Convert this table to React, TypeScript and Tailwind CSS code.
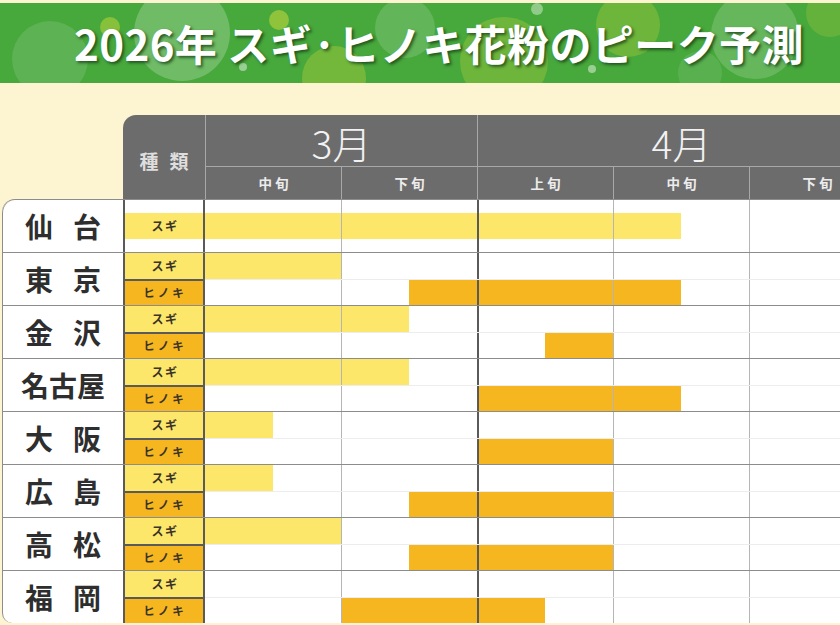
import React from "react";

type Sub = { sp: "スギ" | "ヒノキ"; s: number; e: number };
type City = { name: string[]; rows: Sub[]; single?: boolean };

const cities: City[] = [
  { name: ["仙", "台"], rows: [{ sp: "スギ", s: 0, e: 7 }], single: true },
  { name: ["東", "京"], rows: [{ sp: "スギ", s: 0, e: 2 }, { sp: "ヒノキ", s: 3, e: 7 }] },
  { name: ["金", "沢"], rows: [{ sp: "スギ", s: 0, e: 3 }, { sp: "ヒノキ", s: 5, e: 6 }] },
  { name: ["名", "古", "屋"], rows: [{ sp: "スギ", s: 0, e: 3 }, { sp: "ヒノキ", s: 4, e: 7 }] },
  { name: ["大", "阪"], rows: [{ sp: "スギ", s: 0, e: 1 }, { sp: "ヒノキ", s: 4, e: 6 }] },
  { name: ["広", "島"], rows: [{ sp: "スギ", s: 0, e: 1 }, { sp: "ヒノキ", s: 3, e: 6 }] },
  { name: ["高", "松"], rows: [{ sp: "スギ", s: 0, e: 2 }, { sp: "ヒノキ", s: 3, e: 6 }] },
  { name: ["福", "岡"], rows: [{ sp: "スギ", s: 0, e: 0 }, { sp: "ヒノキ", s: 2, e: 5 }] },
];

const HALVES = [0, 1, 2, 3, 4, 5, 6, 7, 8, 9];

function lineFor(i: number) {
  if (i === 4) return "border-l-2 border-[#5a5a5a]";
  if (i === 2 || i === 6 || i === 8) return "border-l border-[#b5b5b5]";
  return "";
}

function Species({ sp, second }: { sp: string; second?: boolean }) {
  const isSugi = sp === "スギ";
  return (
    <div
      className={
        "h-[26px] flex items-center justify-center font-bold text-[#3b3428] " +
        (isSugi
          ? "bg-[#fde76b] text-[12px] tracking-[0.12em] "
          : "bg-[#f6b61f] text-[11.5px] tracking-[0.26em] ") +
        (second ? "border-t-2 border-[#5a5a5a]" : "")
      }
    >
      <span className="pl-[2px]">{sp}</span>
    </div>
  );
}

function ChartRow({ sub, second }: { sub: Sub; second?: boolean }) {
  const color = sub.sp === "スギ" ? "bg-[#fde76b]" : "bg-[#f6b61f]";
  return (
    <div className={"h-[26px] flex " + (second ? "border-t border-[#ededed]" : "")}>
      {HALVES.map((i) => {
        const filled = i >= sub.s && i < sub.e;
        return (
          <div
            key={i}
            className={"w-[68px] shrink-0 h-full " + (filled ? color : "bg-white") + " " + lineFor(i)}
          />
        );
      })}
    </div>
  );
}

function EmptyChartStrip({ h }: { h: string }) {
  return (
    <div className={"flex " + h}>
      {HALVES.map((i) => (
        <div key={i} className={"w-[68px] shrink-0 h-full bg-white " + lineFor(i)} />
      ))}
    </div>
  );
}

function Banner() {
  return (
    <div className="relative mt-[3px] h-[80px] bg-[#47a83c] overflow-hidden flex items-center justify-center pl-[38px]">
      <svg className="absolute inset-0" width="840" height="80" viewBox="0 0 840 80">
        <circle cx="50" cy="56" r="38" fill="#ffffff" opacity="0.12" />
        <circle cx="110" cy="24" r="10" fill="#c8d83a" opacity="0.5" />
        <circle cx="182" cy="30" r="48" fill="#ffffff" opacity="0.22" />
        <circle cx="243" cy="64" r="4" fill="#ffffff" opacity="0.45" />
        <circle cx="279" cy="17" r="10" fill="#c8d83a" opacity="0.55" />
        <circle cx="334" cy="75" r="32" fill="#a9c93a" opacity="0.45" />
        <circle cx="405" cy="25" r="30" fill="#ffffff" opacity="0.15" />
        <circle cx="504" cy="58" r="44" fill="#a9c93a" opacity="0.4" />
        <circle cx="537" cy="6" r="6" fill="#ffffff" opacity="0.4" />
        <circle cx="592" cy="66" r="4" fill="#ffffff" opacity="0.45" />
        <circle cx="628" cy="22" r="32" fill="#a9c93a" opacity="0.4" />
        <circle cx="755" cy="32" r="44" fill="#ffffff" opacity="0.17" />
        <circle cx="700" cy="70" r="22" fill="#ffffff" opacity="0.1" />
        <circle cx="830" cy="10" r="24" fill="#a9c93a" opacity="0.3" />
      </svg>
      <div className="relative text-white font-bold text-[42px] leading-none tracking-[0.01em] whitespace-nowrap [text-shadow:2px_2px_3px_rgba(20,60,20,0.75)]">
        2026年 スギ·ヒノキ花粉のピーク予測
      </div>
    </div>
  );
}

export default function App() {
  return (
    <div className="w-[840px] h-[625px] overflow-hidden bg-[#fdf5d1] font-['Noto_Sans_CJK_JP','Noto_Sans',sans-serif]">
      <Banner />
      <div className="ml-[2px] mt-[32px] w-[883px]">
        {/* header */}
        <div className="flex h-[84px]">
          <div className="w-[121px] shrink-0" />
          <div className="w-[82px] shrink-0 bg-[#6c6c6c] rounded-tl-[13px] flex items-center justify-center pt-[8px] gap-[11px] text-[19px] font-bold text-[#dedede]">
            <span>種</span>
            <span>類</span>
          </div>
          <div className="flex flex-col bg-[#6c6c6c]">
            <div className="flex h-[51px]">
              <div className="w-[272px] shrink-0 border-l border-[#a8a8a8] flex items-center justify-center pt-[4px] text-[39px] font-light text-[#f2f2f2] leading-none">
                3月
              </div>
              <div className="w-[408px] shrink-0 border-l border-[#a8a8a8] flex items-center justify-center pt-[4px] text-[39px] font-light text-[#f2f2f2] leading-none">
                4月
              </div>
            </div>
            <div className="flex h-[33px] border-t border-[#a8a8a8]">
              {["中旬", "下旬", "上旬", "中旬", "下旬"].map((t, i) => (
                <div
                  key={i}
                  className="w-[136px] shrink-0 border-l border-[#a8a8a8] flex items-center justify-center text-[13.5px] font-bold tracking-[0.22em] text-[#ececec]"
                >
                  <span className="pl-[3px]">{t}</span>
                </div>
              ))}
            </div>
          </div>
        </div>
        {/* body */}
        <div className="flex flex-col">
          {cities.map((c, ci) => (
            <div
              key={ci}
              className={"flex h-[53px] border-t border-[#8c8c8c] " + (ci === 0 ? "rounded-tl-[13px] overflow-hidden" : "")}
            >
              <div
                className={
                  "w-[121px] shrink-0 bg-white border-l border-[#8c8c8c] flex items-center justify-center text-[28px] font-semibold text-[#2e2e2e] " +
                  (c.name.length === 2 ? "gap-[20px]" : "gap-0") +
                  (ci === cities.length - 1 ? " rounded-bl-[10px]" : "") +
                  (ci === 0 ? " rounded-tl-[13px]" : "")
                }
              >
                {c.name.map((ch, k) => (
                  <span key={k}>{ch}</span>
                ))}
              </div>
              <div className="w-[82px] shrink-0 bg-white border-x-2 border-[#5a5a5a] flex flex-col justify-center">
                {c.rows.map((r, k) => (
                  <Species key={k} sp={r.sp} second={k === 1} />
                ))}
              </div>
              <div className="flex flex-col justify-center bg-white">
                {c.single ? (
                  <>
                    <EmptyChartStrip h="h-[13px]" />
                    <ChartRow sub={c.rows[0]} />
                    <EmptyChartStrip h="h-[13px]" />
                  </>
                ) : (
                  c.rows.map((r, k) => <ChartRow key={k} sub={r} second={k === 1} />)
                )}
              </div>
            </div>
          ))}
        </div>
      </div>
    </div>
  );
}
